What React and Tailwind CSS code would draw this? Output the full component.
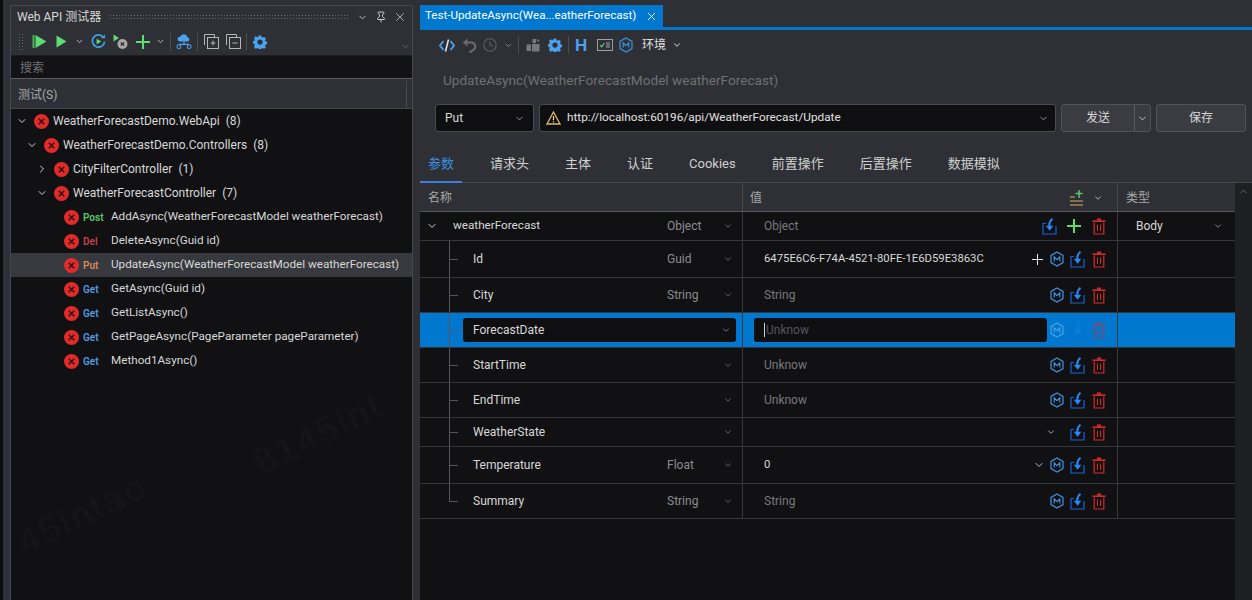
import React from 'react';
import { ChevronDown, ChevronRight, ChevronUp, X, Pin } from 'lucide-react';

const FONT = "font-['Roboto','Noto_Sans_CJK_SC',sans-serif]";

const ErrorDot = () => (
  <svg width="15" height="15" viewBox="0 0 15 15" className="shrink-0">
    <circle cx="7.5" cy="7.5" r="7.5" fill="#e02b2b" />
    <path d="M4.8 4.8l5.4 5.4M10.2 4.8l-5.4 5.4" stroke="#3a0d0d" strokeWidth="1.6" />
  </svg>
);

const Caret = ({ className = 'text-[#9a9a9a]', size = 11 }) => (
  <ChevronDown size={size} strokeWidth={2} className={`shrink-0 ${className}`} />
);

const PlusGlyph = ({ size = 14, color = '#5ddc72', weight = 2 }) => (
  <svg width={size} height={size} viewBox={`0 0 ${size} ${size}`} className="shrink-0">
    <path d={`M${size / 2} 0v${size}M0 ${size / 2}h${size}`} stroke={color} strokeWidth={weight} />
  </svg>
);

// 蓝色六边形 M 图标
const HexM = ({ dim }) => (
  <svg width="14" height="16" viewBox="0 0 14 16" className="shrink-0" opacity={dim ? 0.45 : 1}>
    <path d="M7 1l6 3.4v7.2L7 15l-6-3.4V4.4z" fill="none" stroke={dim ? '#9fd4ff' : '#3f93dc'} strokeWidth="1.2" />
    <path d="M4.2 10.4V5.8L7 8.6l2.8-2.8v4.6" fill="none" stroke={dim ? '#9fd4ff' : '#3f93dc'} strokeWidth="1.1" />
  </svg>
);

const ImportIcon = ({ dim }) => (
  <svg width="15" height="17" viewBox="0 0 15 17" className="shrink-0" opacity={dim ? 0.3 : 1}>
    <path d="M4 5.5H1v10.5h13V8" fill="none" stroke="#1a62d0" strokeWidth="1.2" />
    <path d="M10.5 0.8C7.8 2.8 6.8 5.2 7.4 9" fill="none" stroke="#2a86f5" strokeWidth="2" />
    <path d="M3.8 7.8l3.9 5 3.6-5z" fill="#2a86f5" />
  </svg>
);

const TrashIcon = ({ dim }) => (
  <svg width="14" height="17" viewBox="0 0 14 17" className="shrink-0" opacity={dim ? 0.6 : 1}>
    <path d="M5 0.5h4v2.2H5z" fill="#d32b2b" />
    <path d="M0.5 3.2h13" stroke="#d32b2b" strokeWidth="1.6" />
    <path d="M2.2 4.5V16h9.6V4.5" fill="none" stroke="#d32b2b" strokeWidth="1.2" />
    <path d="M5.5 6.5v6.5M8.5 6.5v6.5" stroke="#d32b2b" strokeWidth="1" />
  </svg>
);

const RunAllIcon = () => (
  <svg width="15" height="15" viewBox="0 0 15 15">
    <path d="M0.5 1h2v13h-2z" fill="#46b85a" />
    <path d="M3.5 1L14.5 7.5 3.5 14z" fill="#5ddc72" />
  </svg>
);
const RunIcon = () => (
  <svg width="11" height="13" viewBox="0 0 11 13"><path d="M0.5 0.5l10 6-10 6z" fill="#5ddc72" /></svg>
);
const RepeatIcon = () => (
  <svg width="15" height="15" viewBox="0 0 16 16">
    <path d="M13.5 4A6.5 6.5 0 1 0 14.5 8" fill="none" stroke="#3d9fe8" strokeWidth="1.8" />
    <path d="M10.5 4.5h4.5V0.5z" fill="#3d9fe8" />
    <path d="M6 5l5 3-5 3z" fill="#5ddc72" />
  </svg>
);
const StopRunIcon = () => (
  <svg width="15" height="16" viewBox="0 0 15 16">
    <path d="M0.5 0.5l5.5 3.5-5.5 3.5z" fill="#5ddc72" />
    <circle cx="9.5" cy="10" r="5" fill="#a8a8a8" />
    <path d="M7.8 8.3l3.4 3.4M11.2 8.3l-3.4 3.4" stroke="#222" strokeWidth="1.2" />
  </svg>
);
const CloudIcon = () => (
  <svg width="16" height="17" viewBox="0 0 17 17">
    <path d="M4 8.5a2.5 2.5 0 0 1 .3-5 4.2 4.2 0 0 1 8 .4 2.4 2.4 0 0 1 .4 4.6z" fill="#4aa3ee" />
    <path d="M8.5 8.5v3M3 11.5h11" stroke="#4aa3ee" strokeWidth="1.2" fill="none" />
    <circle cx="3" cy="14" r="2" fill="none" stroke="#4aa3ee" strokeWidth="1.1" />
    <circle cx="14" cy="14" r="2" fill="none" stroke="#4aa3ee" strokeWidth="1.1" />
  </svg>
);
const ExpandIcon = ({ minus }) => (
  <svg width="15" height="15" viewBox="0 0 15 15">
    <path d="M0.5 11V0.5h10V3" fill="none" stroke="#b5b5b5" strokeWidth="1" />
    <rect x="3.5" y="3.5" width="11" height="11" fill="#2e3036" stroke="#b5b5b5" />
    <path d="M6.5 9h5" stroke="#b5b5b5" />
    {!minus && <path d="M9 6.5v5" stroke="#b5b5b5" />}
  </svg>
);
const GearIcon = ({ size = 14 }) => (
  <svg width={size} height={size} viewBox="0 0 16 16" className="shrink-0">
    <path d="M6.3 0h3.4l.4 2.2 1.3.6 1.9-1.3 2.4 2.4-1.3 1.9.6 1.3 2.2.4v3.4l-2.2.4-.6 1.3 1.3 1.9-2.4 2.4-1.9-1.3-1.3.6-.4 2.2H6.3l-.4-2.2-1.3-.6-1.9 1.3L.3 13.9l1.3-1.9-.6-1.3L-1 10.3V6.9l2-.4.6-1.3L.3 3.3l2.4-2.4 1.9 1.3 1.3-.6z" fill="#4aa3ee" transform="translate(0.7 0.7) scale(.9)" />
    <circle cx="8" cy="8" r="3" fill="#2e3036" />
  </svg>
);
const CodeIcon = () => (
  <svg width="16" height="13" viewBox="0 0 16 13" className="shrink-0">
    <path d="M4.5 2L1 6.5 4.5 11M11.5 2L15 6.5 11.5 11" fill="none" stroke="#4aa3ee" strokeWidth="1.8" />
    <path d="M9.5 0.5L6.5 12.5" stroke="#d8e6f0" strokeWidth="1.5" />
  </svg>
);
const UndoIcon = () => (
  <svg width="15" height="15" viewBox="0 0 15 15" className="shrink-0">
    <path d="M3 4.5h6.5a4 4 0 0 1 1.5 7.6L7.5 14.5" fill="none" stroke="#6a6b6f" strokeWidth="2.2" />
    <path d="M5.5 0.5L0.8 4.5l4.7 4z" fill="#6a6b6f" />
  </svg>
);
const ClockIcon = () => (
  <svg width="14" height="14" viewBox="0 0 14 14" className="shrink-0">
    <circle cx="7" cy="7" r="6.2" fill="none" stroke="#5f6064" strokeWidth="1.1" />
    <path d="M7 3.5V7.5H10" fill="none" stroke="#5f6064" strokeWidth="1" />
  </svg>
);
const BlocksIcon = () => (
  <svg width="14" height="14" viewBox="0 0 14 14" className="shrink-0">
    <path d="M0.5 6.5h4.5V13H0.5zM6 6h7.5v7.5H6zM6.5 1l3.5 0 0 4H6.5z" fill="#77787c" />
    <path d="M11 1.5l2 2" stroke="#77787c" strokeWidth="1.5" />
  </svg>
);
const Sep = () => <div className="w-px h-[18px] bg-[#4a4c52] shrink-0" />;

const tree = [
  { depth: 0, open: true, name: 'WeatherForecastDemo.WebApi', count: 8 },
  { depth: 1, open: true, name: 'WeatherForecastDemo.Controllers', count: 8 },
  { depth: 2, open: false, name: 'CityFilterController', count: 1 },
  { depth: 2, open: true, name: 'WeatherForecastController', count: 7 },
  { method: 'Post', name: 'AddAsync(WeatherForecastModel weatherForecast)' },
  { method: 'Del', name: 'DeleteAsync(Guid id)' },
  { method: 'Put', name: 'UpdateAsync(WeatherForecastModel weatherForecast)', active: true },
  { method: 'Get', name: 'GetAsync(Guid id)' },
  { method: 'Get', name: 'GetListAsync()' },
  { method: 'Get', name: 'GetPageAsync(PageParameter pageParameter)' },
  { method: 'Get', name: 'Method1Async()' },
];

const methodColor = {
  Post: 'text-[#5cc46c]',
  Del: 'text-[#c2404a]',
  Put: 'text-[#d98a5a]',
  Get: 'text-[#4f9ee6]',
};

const depthPad = ['pl-[5px]', 'pl-[15px]', 'pl-[25px]'];

const TreeRow = ({ item }) => {
  if (item.method) {
    return (
      <div className={`h-6 flex items-center pl-[53px] ${item.active ? 'bg-[#37393e]' : ''}`}>
        <ErrorDot />
        <span className={`w-[28px] shrink-0 ml-[4px] text-[10px] font-semibold ${methodColor[item.method]}`}>{item.method}</span>
        <span className="text-[#d8d8d8] text-[11.7px] whitespace-nowrap">{item.name}</span>
      </div>
    );
  }
  return (
    <div className={`h-6 flex items-center ${depthPad[item.depth]}`}>
      {item.open ? (
        <ChevronDown size={12} strokeWidth={2} className="text-[#d0d0d0] shrink-0" />
      ) : (
        <ChevronRight size={12} strokeWidth={2} className="text-[#d0d0d0] shrink-0" />
      )}
      <span className="w-[6px] shrink-0" />
      <ErrorDot />
      <span className="ml-[4px] text-[#d8d8d8] whitespace-nowrap">{item.name}</span>
      <span className="ml-[6px] text-[#d8d8d8]">({item.count})</span>
    </div>
  );
};

const LeftPanel = () => (
  <div className="w-[403px] ml-[10px] mt-[5px] shrink-0 border border-[#45474d] border-b-0 flex flex-col h-[595px]">
    <div className="h-[22px] flex items-center pl-[6px] pr-[5px] shrink-0">
      <span className="text-[#d8d8d8] whitespace-nowrap">Web API 测试器</span>
      <div className="flex-1 h-[6px] mx-[8px] bg-[radial-gradient(#6a6c72_1px,transparent_1px)] bg-[length:3px_3px]" />
      <ChevronDown size={11} strokeWidth={2} className="text-[#c8c8c8]" />
      <Pin size={12} className="text-[#c8c8c8] ml-[7px]" />
      <X size={14} className="text-[#c8c8c8] ml-[6px]" strokeWidth={1.4} />
    </div>
    <div className="h-[27px] flex items-center pl-[7px] pr-[2px] shrink-0">
      <div className="w-[6px] h-[17px] mr-[8px] bg-[radial-gradient(#6a6c72_1px,transparent_1px)] bg-[length:3px_3px]" />
      <RunAllIcon />
      <span className="w-[9px]" />
      <RunIcon />
      <ChevronDown size={9} strokeWidth={2.5} className="text-[#c0c0c0] ml-[8px]" />
      <span className="w-[7px]" />
      <RepeatIcon />
      <span className="w-[7px]" />
      <StopRunIcon />
      <span className="w-[8px]" />
      <PlusGlyph />
      <ChevronDown size={9} strokeWidth={2.5} className="text-[#c0c0c0] ml-[6px]" />
      <span className="w-[5px]" />
      <Sep />
      <span className="w-[5px]" />
      <CloudIcon />
      <span className="w-[5px]" />
      <Sep />
      <span className="w-[6px]" />
      <ExpandIcon />
      <span className="w-[7px]" />
      <ExpandIcon minus />
      <span className="w-[5px]" />
      <Sep />
      <span className="w-[6px]" />
      <GearIcon />
      <div className="flex-1" />
      <ChevronDown size={9} className="text-[#777] self-end mb-[4px]" />
    </div>
    <div className="h-[24px] bg-[#131316] border-t border-t-[#1c1c1f] border-b border-b-[#5a5c60] flex items-center pl-[9px] pt-[2px] text-[#6f7074] shrink-0">搜索</div>
    <div className="h-[29px] mt-[1px] flex items-center pl-[7px] pt-[1px] text-[#a8a8a8] border-b border-[#45474d] shrink-0">
      <span className="flex-1">测试(S)</span>
      <div className="w-px h-full bg-[#4a4c52] mr-[5px]" />
    </div>
    <div className="flex-1 bg-[#111114]">
      {tree.map((item) => (
        <TreeRow key={item.name} item={item} />
      ))}
    </div>
  </div>
);

const Toolbar = () => (
  <div className="h-[30px] flex items-center pl-[19px] text-[#d8d8d8] shrink-0">
    <CodeIcon />
    <span className="w-[7px]" />
    <UndoIcon />
    <span className="w-[6px]" />
    <ClockIcon />
    <ChevronDown size={9} strokeWidth={2.5} className="text-[#8a8a8a] ml-[7px]" />
    <span className="w-[5px]" />
    <Sep />
    <span className="w-[7px]" />
    <BlocksIcon />
    <span className="w-[8px]" />
    <GearIcon />
    <span className="w-[6px]" />
    <Sep />
    <span className="w-[6px]" />
    <span className="text-[#4aa3ee] font-['Liberation_Sans'] font-bold text-[17px] leading-none w-[13px]">H</span>
    <span className="w-[9px]" />
    <svg width="16" height="12" viewBox="0 0 16 12" className="shrink-0">
      <rect x="0.5" y="0.5" width="15" height="11" fill="none" stroke="#9aa0a0" />
      <path d="M3 6l1.6 1.8L7.4 4" fill="none" stroke="#5ddc72" strokeWidth="1.1" />
      <path d="M9 4h4M9 6h4M9 8h4" stroke="#9aa0a0" />
    </svg>
    <span className="w-[6px]" />
    <HexM />
    <span className="ml-[9px] text-[#e0e0e0]">环境</span>
    <ChevronDown size={10} strokeWidth={2.5} className="text-[#c0c0c0] ml-[6px]" />
  </div>
);

const UrlBar = () => (
  <div className="h-[28px] mt-[9px] ml-[15px] mr-[6px] flex items-stretch gap-[5px] shrink-0">
    <div className="w-[99px] bg-[#0f0f12] border border-[#4a4c52] rounded-[3px] flex items-center pl-[9px] pr-[8px] text-[#d8d8d8]">
      <span className="flex-1">Put</span>
      <Caret />
    </div>
    <div className="w-[517px] bg-[#0f0f12] border border-[#4a4c52] rounded-[3px] flex items-center pl-[6px] pr-[6px] text-[#e0e0e0]">
      <svg width="15" height="14" viewBox="0 0 15 14" className="shrink-0 mr-[6px]">
        <path d="M7.5 1L14 13H1z" fill="none" stroke="#e0b96a" strokeWidth="1.3" />
        <path d="M7.5 5v4.2M7.5 10.2v1.3" stroke="#e0d0a0" strokeWidth="1.3" />
      </svg>
      <span className="flex-1 text-[11.8px] whitespace-nowrap">http://localhost:60196/api/WeatherForecast/Update</span>
      <Caret />
    </div>
    <div className="w-[90px] bg-[#3a3c42] border border-[#50525a] rounded-[3px] flex items-stretch text-[#d8d8d8]">
      <span className="flex-1 flex items-center justify-center">发送</span>
      <span className="w-[16px] border-l border-[#5a5c62] flex items-center justify-center"><Caret className="text-[#d0d0d0]" /></span>
    </div>
    <div className="w-[90px] bg-[#3a3c42] border border-[#50525a] rounded-[3px] flex items-center justify-center text-[#d8d8d8]">保存</div>
  </div>
);

const tabs = ['请求头', '主体', '认证', 'Cookies', '前置操作', '后置操作', '数据模拟'];

const Tabs = () => (
  <div className="h-[51px] shrink-0 border-b border-[#45474d] flex items-start gap-[36px]">
    <div className="h-[51px] w-[42px] -mr-[8px] pt-[23px] text-center text-[#3d8fe0] text-[13px] border-b-[2px] border-[#3d7fe0] leading-[18px] shrink-0">参数</div>
    {tabs.map((label) => (
      <span key={label} className="pt-[23px] leading-[18px] text-[13px] text-[#d0d0d0] whitespace-nowrap">{label}</span>
    ))}
  </div>
);

const rows = [
  { name: 'weatherForecast', type: 'Object', ph: 'Object', h: 'h-[29px]', root: true, add: true, typeCol: 'Body' },
  { name: 'Id', type: 'Guid', value: '6475E6C6-F74A-4521-80FE-1E6D59E3863C', h: 'h-[37px]', plus: true, mIcon: true },
  { name: 'City', type: 'String', ph: 'String', h: 'h-[35px]', mIcon: true },
  { name: 'ForecastDate', ph: 'Unknow', h: 'h-[35px]', selected: true, mIcon: true },
  { name: 'StartTime', ph: 'Unknow', h: 'h-[35px]', mIcon: true },
  { name: 'EndTime', ph: 'Unknow', h: 'h-[35px]', mIcon: true },
  { name: 'WeatherState', h: 'h-[29px]', enumCaret: true },
  { name: 'Temperature', type: 'Float', value: '0', h: 'h-[37px]', valCaret: true, mIcon: true },
  { name: 'Summary', type: 'String', ph: 'String', h: 'h-[35px]', mIcon: true, last: true },
];

const Row = ({ row }) => {
  const sel = row.selected;
  return (
    <div className={`${row.h} flex border-b border-[#36383c] shrink-0 ${sel ? 'bg-[#0078d0]' : ''}`}>
      <div className="w-[323px] relative flex items-center border-r border-[#36383c] shrink-0">
        {row.root ? (
          <>
            <ChevronDown size={12} strokeWidth={2} className="text-[#d0d0d0] ml-[6px] mr-[15px] shrink-0" />
            <span className="text-[#d8d8d8] text-[11.7px] w-[214px]">{row.name}</span>
          </>
        ) : (
          <>
            <div className={`absolute left-[29px] top-0 w-px bg-[#55575c] ${row.last ? 'h-1/2' : 'h-full'}`} />
            <div className="absolute left-[29px] top-1/2 w-[9px] h-px bg-[#55575c]" />
            {sel ? (
              <div className="ml-[43px] mr-[6px] w-[273px] h-[24px] bg-[#0f0f12] rounded-[3px] flex items-center pl-[10px] pr-[5px] text-[#d8d8d8] shrink-0">
                <span className="flex-1">{row.name}</span>
                <Caret size={10} className="text-[#8a8a8a]" />
              </div>
            ) : (
              <span className="ml-[53px] w-[194px] text-[#d8d8d8] shrink-0">{row.name}</span>
            )}
          </>
        )}
        {!sel && (
          <>
            <span className="flex-1 text-[#8b8c90]">{row.type}</span>
            <Caret size={10} className="text-[#77787c] mr-[9px]" />
          </>
        )}
      </div>
      <div className="w-[375px] flex items-center border-r border-[#36383c] pr-[11px] shrink-0">
        {sel ? (
          <div className="ml-[11px] w-[293px] h-[24px] bg-[#0f0f12] rounded-[3px] flex items-center pl-[10px] shrink-0 text-[#55565a]">
            <span className="w-px h-[14px] bg-[#d0d0d0] mr-[1px]" />
            {row.ph}
          </div>
        ) : (
          <span className={`ml-[21px] flex-1 whitespace-nowrap ${row.value ? 'text-[11.3px] text-[#d8d8d8]' : 'text-[#77787c]'}`}>{row.value || row.ph}</span>
        )}
        {sel && <span className="flex-1" />}
        {row.plus && <span className="mr-[7px]"><PlusGlyph size={11} color="#e8e8e8" weight={1} /></span>}
        {row.valCaret && <ChevronDown size={12} className="text-[#bdbdbd] mr-[5px]" />}
        {row.enumCaret && <Caret size={10} className="text-[#c0c0c0] mr-[8px]" />}
        {row.mIcon && <HexM dim={sel} />}
        {row.add ? (
          <div className="flex items-center gap-[10px]">
            <ImportIcon />
            <PlusGlyph />
            <span className="ml-[1px]"><TrashIcon /></span>
          </div>
        ) : (
          <div className="flex items-center gap-[7px] ml-[6px]">
            <ImportIcon dim={sel} />
            <TrashIcon dim={sel} />
          </div>
        )}
      </div>
      <div className="flex-1 flex items-center pl-[18px] pr-[12px] text-[#d8d8d8]">
        {row.typeCol && (
          <>
            <span className="flex-1">{row.typeCol}</span>
            <Caret size={10} />
          </>
        )}
      </div>
    </div>
  );
};

const ParamTable = () => (
  <div className="flex-1 flex min-h-0">
    <div className="w-[815px] shrink-0 flex flex-col bg-[#111114]">
      <div className="h-[29px] flex bg-[#2e3036] border-b border-[#55575c] shrink-0 text-[#a8a8a8]">
        <div className="w-[323px] border-r border-[#45474d] flex items-center pl-[8px] pt-[2px] shrink-0">名称</div>
        <div className="w-[375px] border-r border-[#45474d] flex items-center pl-[7px] pr-[14px] pt-[2px] shrink-0">
          <span className="flex-1">值</span>
          <svg width="14" height="16" viewBox="0 0 14 16" className="mr-[9px]">
            <path d="M9 0v8M5.5 3.5h7" stroke="#5cc46c" strokeWidth="1.5" />
            <path d="M0 7h5M0 11h13M0 15h13" stroke="#d9b060" strokeWidth="1" />
          </svg>
          <Caret size={10} className="text-[#d0d0d0]" />
        </div>
        <div className="flex-1 flex items-center pl-[8px] pt-[2px]">类型</div>
      </div>
      {rows.map((row) => (
        <Row key={row.name} row={row} />
      ))}
    </div>
    <div className="flex-1 bg-[#1e1f23] flex justify-center pt-[3px]">
      <ChevronUp size={11} className="text-[#6a6b6f]" />
    </div>
  </div>
);

const RightPanel = () => (
  <div className="flex-1 ml-[7px] flex flex-col min-w-0">
    <div className="h-[22px] mt-[5px] shrink-0 flex">
      <div className="w-[243px] bg-[#0078d0] flex items-center pl-[5px] text-white whitespace-nowrap">
        <span className="flex-1 text-[11.6px]">Test-UpdateAsync(Wea...eatherForecast)</span>
        <X size={13} className="mr-[5px]" strokeWidth={1.6} />
      </div>
    </div>
    <div className="h-[3px] bg-[#0078d0] shrink-0" />
    <Toolbar />
    <div className="h-[29px] mt-[6px] flex items-center pl-[23px] text-[13.6px] text-[#6f7074] shrink-0">UpdateAsync(WeatherForecastModel weatherForecast)</div>
    <UrlBar />
    <Tabs />
    <ParamTable />
  </div>
);

// 截图上的淡色水印,只留在空白区域
const marks = [
  { text: '8145int', className: 'left-[248px] top-[448px]' },
  { text: '45intao', className: 'left-[12px] top-[528px]' },
];

const App = () => (
  <div className={`relative w-[1252px] h-[600px] overflow-hidden bg-[#2e3036] flex text-[12px] ${FONT}`}>
    <div className="w-[3px] bg-[#0c0c0e] absolute left-0 top-0 bottom-0" />
    <LeftPanel />
    <RightPanel />
    {marks.map((m) => (
      <span
        key={m.text}
        className={`absolute pointer-events-none font-['Liberation_Sans'] text-[36px] tracking-[3px] leading-none text-white/[0.018] whitespace-nowrap origin-top-left -rotate-[26deg] ${m.className}`}
      >
        {m.text}
      </span>
    ))}
  </div>
);

export default App;
